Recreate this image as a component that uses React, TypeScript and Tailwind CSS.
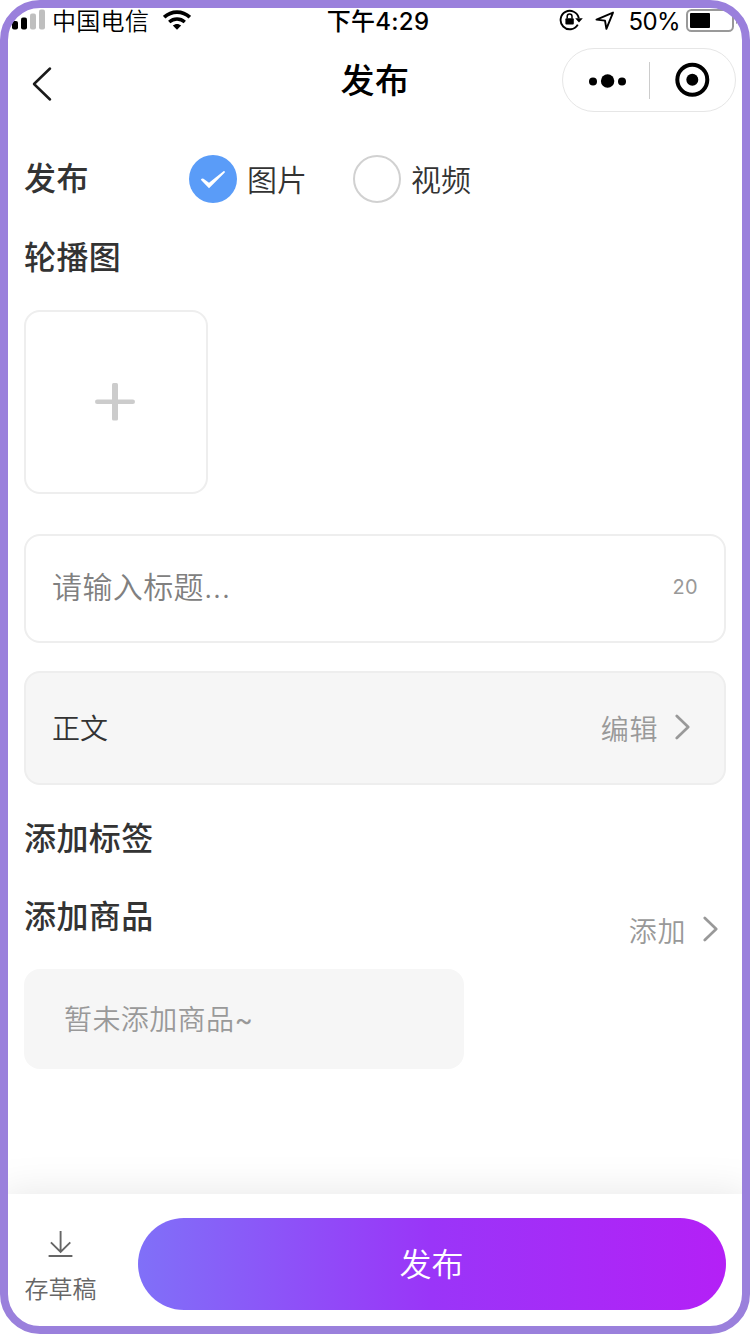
import React from "react";

function StatusBar() {
  return (
    <div className="grid h-10 grid-cols-[1fr_auto_1fr] items-center text-2xl leading-8 text-black">
      <div className="flex h-10 items-center pl-[12px]">
        <svg width="34" height="22" viewBox="0 0 34 22" className="shrink-0">
          <rect x="0" y="12" width="6" height="8.5" rx="2" fill="#000" />
          <rect x="9" y="8.5" width="6" height="12" rx="2" fill="#000" />
          <rect x="18" y="4.5" width="6" height="16" rx="2" fill="#bfbfbf" />
          <rect x="27" y="0.5" width="6" height="20" rx="2" fill="#bfbfbf" />
        </svg>
        <span className="ml-[6px] whitespace-nowrap pt-[3px] font-[350] tracking-[0.3px]">中国电信</span>
        <svg width="28" height="20" viewBox="0 0 28 20" className="ml-[14px] shrink-0" fill="none" stroke="#000" strokeWidth="3.6">
          <path d="M1.2 7.2 C8.5 0.4 19.5 0.4 26.8 7.2" />
          <path d="M6.2 12 C10.8 8 17.2 8 21.8 12" strokeWidth="3.4" />
          <path d="M9.8 15.6 C12.2 13.4 15.8 13.4 18.2 15.6 L14 19.8 Z" fill="#000" stroke="none" />
        </svg>
      </div>
      <span className="whitespace-nowrap pl-[6px] pt-[3px] font-medium tracking-[0.3px]">下午4:29</span>
      <div className="flex h-10 items-center justify-end pr-[11px]">
        <svg width="24" height="22" viewBox="0 0 24 22" fill="none" stroke="#000" strokeWidth="1.9">
          <path d="M18.8 15.6 A9.2 9.2 0 1 1 19.8 9.2" />
          <path d="M16.2 9.2 H23.8 L20 13.4 Z" fill="#000" stroke="none" />
          <rect x="6.4" y="9.2" width="8.4" height="6.4" rx="1" fill="#000" stroke="none" />
          <path d="M8.2 9.4 V7.3 A2.4 2.4 0 0 1 13 7.3 V9.4" strokeWidth="1.5" />
        </svg>
        <svg width="20" height="20" viewBox="0 0 20 20" className="ml-[12px]" fill="none" stroke="#000" strokeWidth="1.9" strokeLinejoin="round">
          <path d="M1.5 9.6 L18 2.6 L11.4 18.8 L10 10.6 Z" />
        </svg>
        <span className="ml-[14px] pt-[3px] tracking-[-0.6px]">50%</span>
        <svg width="53" height="24" viewBox="0 0 53 24" className="ml-[6px] mt-px">
          <rect x="1" y="1" width="46" height="21" rx="4.5" fill="none" stroke="#999" strokeWidth="2" />
          <rect x="4" y="4" width="20" height="15" rx="1" fill="#000" />
          <path d="M50 8 C52.6 9 52.6 14 50 15 Z" fill="#999" />
        </svg>
      </div>
    </div>
  );
}

function NavBar() {
  return (
    <header className="grid h-20 grid-cols-[1fr_auto_1fr] items-center">
      <svg width="22" height="36" viewBox="0 0 22 36" className="ml-[31px] mt-[8px]" fill="none" stroke="#1a1a1a" strokeWidth="2.5" strokeLinecap="round" strokeLinejoin="round">
        <path d="M19 2.5 L3 18 L19 33.5" />
      </svg>
      <h1 className="pt-[2px] text-[34px] font-medium leading-[48px] tracking-[0.5px] text-black">发布</h1>
      <div className="mr-[14px] flex h-16 w-[174px] items-center justify-self-end rounded-full border border-[#e6e6e6]">
        <svg width="38" height="14" viewBox="0 0 38 14" className="ml-[26px] mt-px">
          <circle cx="4" cy="7.4" r="4" />
          <circle cx="18.6" cy="7" r="6.7" />
          <circle cx="33" cy="7.4" r="4" />
        </svg>
        <div className="ml-[22px] h-[37px] w-px bg-[#ccc]" />
        <svg width="36" height="36" viewBox="0 0 36 36" className="ml-[24px]">
          <circle cx="18.3" cy="17.7" r="15" fill="none" stroke="#000" strokeWidth="4" />
          <circle cx="18.3" cy="17.7" r="6" />
        </svg>
      </div>
    </header>
  );
}

function Chevron() {
  return (
    <svg width="16" height="28" viewBox="0 0 16 28" fill="none" stroke="#999" strokeWidth="2.7" strokeLinecap="round" strokeLinejoin="round">
      <path d="M1.8 2 L13.2 13 L1.8 24" />
    </svg>
  );
}

function SectionTitle({ children }: { children: React.ReactNode }) {
  return <h2 className="text-[32px] font-medium leading-[48px] tracking-[0.4px]">{children}</h2>;
}

export default function App() {
  return (
    <div className="relative flex h-[1334px] w-[750px] flex-col overflow-hidden bg-white font-[Inter,'Noto_Sans_CJK_SC',sans-serif] text-[#333]">
      <StatusBar />
      <NavBar />
      <main className="flex flex-1 flex-col px-6">
        <div className="mt-[34px] flex h-[50px] items-center text-[30px] font-[350]">
          <div className="w-[165px] pb-px">
            <SectionTitle>发布</SectionTitle>
          </div>
          <div className="flex h-12 w-12 items-center justify-center rounded-full bg-[#5a9cf8]">
            <svg width="26" height="20" viewBox="0 0 26 20" className="mt-[2px]">
              <path d="M0.8 9.8 Q2 7.8 3.5 8.8 L9 12.8 L23.8 1 Q25.6 1 24.8 2.6 L9 18.2 Z" fill="#fff" />
            </svg>
          </div>
          <span className="ml-[10px] w-[59px] whitespace-nowrap pt-[2px]">图片</span>
          <div className="ml-[47px] h-12 w-12 rounded-full border-2 border-[#d1d1d1]" />
          <span className="ml-[10px] pt-[2px]">视频</span>
        </div>
        <div className="mt-[30px]">
          <SectionTitle>轮播图</SectionTitle>
        </div>
        <button className="mt-[28px] flex h-[184px] w-[184px] items-center justify-center rounded-2xl border-2 border-[#eee]">
          <svg width="40" height="38" viewBox="0 0 40 38" className="-ml-[2px]" fill="#ccc">
            <rect x="0" y="16.5" width="40" height="4.5" rx="2.2" />
            <rect x="17" y="0" width="6" height="37.5" rx="1.5" />
          </svg>
        </button>
        <div className="mt-10 flex h-[109px] w-[702px] items-center justify-between rounded-2xl border-2 border-[#eee] px-[26px] pb-[2px]">
          <span className="text-[30px] font-[350] tracking-[0.4px] text-[#808080]">请输入标题...</span>
          <span className="pb-px text-xl tracking-[0.3px] text-[#999]">20</span>
        </div>
        <div className="mt-7 flex h-[114px] w-[702px] items-center rounded-2xl border-2 border-[#eee] bg-[#f6f6f6] pl-[26px] pr-[33px] text-[28px] font-[350]">
          <span className="pt-[2px]">正文</span>
          <span className="ml-auto mr-[17px] pt-[4px] tracking-[0.6px] text-[#999]">编辑</span>
          <Chevron />
        </div>
        <div className="mt-[30px]">
          <SectionTitle>添加标签</SectionTitle>
        </div>
        <div className="mt-[30px] flex h-[76px] items-start justify-between">
          <SectionTitle>添加商品</SectionTitle>
          <div className="mt-[13px] flex items-center pr-[7px] text-[28px] font-[350] leading-[44px] text-[#999]">
            <span className="mr-[17px] pt-[4px] tracking-[0.6px]">添加</span>
            <Chevron />
          </div>
        </div>
        <div className="flex h-[100px] w-[440px] items-center rounded-2xl bg-[#f6f6f6] pl-10 pt-[2px] text-[28px] font-[350] tracking-[0.4px] text-[#999]">
          暂未添加商品<span className="font-normal">~</span>
        </div>
      </main>
      <footer className="flex h-[140px] items-start bg-white pl-6 pt-6 shadow-[0_0_40px_rgba(0,0,0,0.1)]">
        <div className="flex w-[73px] flex-col items-center text-2xl font-[350] text-[#666]">
          <svg width="26" height="28" viewBox="0 0 26 28" className="mt-[12px]" fill="none" stroke="#666" strokeWidth="1.9">
            <path d="M12.6 1 V22 M2.9 12.3 L12.6 22 L22.3 12.3 M0.6 26 H24.4" />
          </svg>
          <span className="mt-[14px] leading-9">存草稿</span>
        </div>
        <button className="ml-[41px] h-[92px] w-[588px] rounded-full bg-linear-to-r/srgb from-[#8070f8] via-[#9a35f8] to-[#b420f6] pr-px pt-[2px] text-[32px] font-[350] text-white">
          发布
        </button>
      </footer>
      <div className="pointer-events-none absolute inset-0 rounded-[40px] border-8 border-[#9a80dc]" />
    </div>
  );
}
